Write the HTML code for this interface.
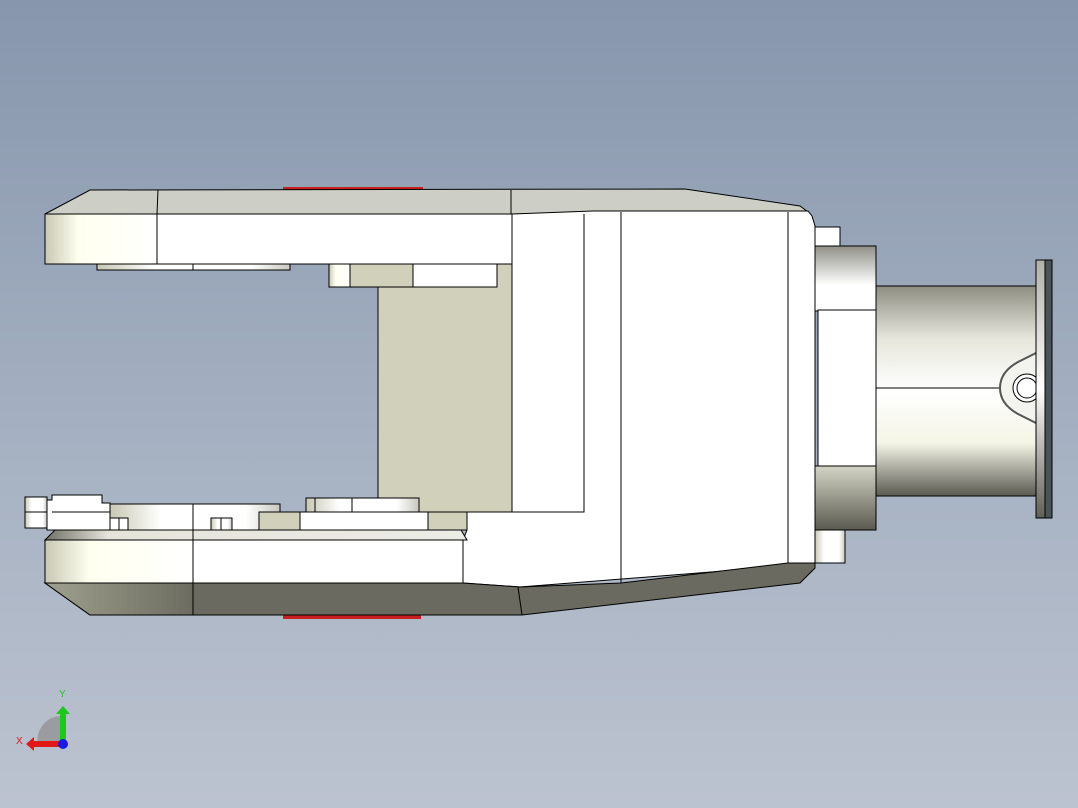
<!DOCTYPE html>
<html><head><meta charset="utf-8"><style>
html,body{margin:0;padding:0;width:1078px;height:808px;overflow:hidden}
body{background:linear-gradient(#8796ad 0%,#a3afc0 50%,#bcc3d0 100%)}
svg{position:absolute;left:0;top:0}
</style></head><body>
<svg width="1078" height="808" viewBox="0 0 1078 808" xmlns="http://www.w3.org/2000/svg">
<defs>
<linearGradient id="endL" x1="0" x2="1" y1="0" y2="0">
<stop offset="0" stop-color="#c8c8b4"/><stop offset="0.3" stop-color="#fffff0"/><stop offset="1" stop-color="#ffffff"/></linearGradient>
<linearGradient id="endD" x1="0" x2="1" y1="0" y2="0">
<stop offset="0" stop-color="#a0a090"/><stop offset="0.5" stop-color="#868676"/><stop offset="1" stop-color="#6c6c62"/></linearGradient>
<linearGradient id="cylV" x1="0" x2="0" y1="0" y2="1">
<stop offset="0" stop-color="#8d8d82"/><stop offset="0.25" stop-color="#e6e6dc"/><stop offset="0.5" stop-color="#ffffff"/><stop offset="0.75" stop-color="#f4f4e6"/><stop offset="1" stop-color="#5a5a52"/></linearGradient>
<linearGradient id="cylT" x1="0" x2="0" y1="0" y2="1">
<stop offset="0" stop-color="#909088"/><stop offset="0.6" stop-color="#ffffff"/><stop offset="1" stop-color="#ffffff"/></linearGradient>
<linearGradient id="cylB" x1="0" x2="0" y1="0" y2="1">
<stop offset="0" stop-color="#d4d4c6"/><stop offset="1" stop-color="#5a5a50"/></linearGradient>
<linearGradient id="flg" x1="0" x2="0" y1="0" y2="1">
<stop offset="0" stop-color="#b0b0a8"/><stop offset="0.5" stop-color="#ffffff"/><stop offset="1" stop-color="#606058"/></linearGradient>
<linearGradient id="hz" x1="0" x2="1" y1="0" y2="0">
<stop offset="0" stop-color="#c8c8b4"/><stop offset="0.3" stop-color="#ffffff"/><stop offset="0.8" stop-color="#ffffff"/><stop offset="1" stop-color="#c8c8c0"/></linearGradient>
<linearGradient id="strip" x1="0" x2="1" y1="0" y2="0">
<stop offset="0" stop-color="#707066"/><stop offset="0.15" stop-color="#e4e4da"/><stop offset="1" stop-color="#ecece6"/></linearGradient>
</defs>
<g stroke="#000" stroke-width="1">
<rect x="283" y="187" width="140" height="3" fill="#c82020" stroke="none"/>
<rect x="283" y="615" width="138" height="4" fill="#c82020" stroke="none"/>
<polygon points="45,214 90,190 685,189 800,206 808,212 512,214" fill="#cdcfc7"/>
<line x1="158" y1="190" x2="157" y2="214"/>
<line x1="511" y1="190" x2="511" y2="214"/>
<rect x="378" y="287" width="134" height="226" fill="#d1d0bb"/>
<rect x="497" y="264" width="15" height="24" fill="#d1d0bb" stroke="none"/>
<rect x="97" y="264" width="193" height="6" fill="url(#hz)"/>
<line x1="193" y1="264" x2="193" y2="270"/>
<rect x="329" y="264" width="168" height="23" fill="#d1d0bb"/>
<rect x="329" y="264" width="21" height="23" fill="url(#endL)"/>
<rect x="413" y="264" width="84" height="23" fill="#fff"/>
<rect x="45" y="214" width="467" height="50" fill="#fff"/>
<rect x="45" y="214" width="112" height="50" fill="url(#endL)"/>
<polygon points="512,214 593,211 808,211 812,216 815,226 815,563 800,565 520,587 463,583 463,540 467,530 467,512 512,512" fill="#fff"/>
<polyline points="512,214 512,512 584,512 584,214" fill="none"/>
<line x1="621" y1="212" x2="621" y2="583"/>
<line x1="788" y1="212" x2="788" y2="563"/>
<polygon points="45,583 463,583 520,587 621,583 788,563 815,563 815,568 800,583 522,615 90,615" fill="#6a6a60"/>
<polygon points="45,583 193,583 193,615 90,615" fill="url(#endD)"/>
<line x1="193" y1="583" x2="193" y2="615"/>
<line x1="518" y1="587" x2="522" y2="615"/>
<rect x="25" y="497" width="22" height="31" fill="url(#hz)"/>
<line x1="25" y1="512" x2="47" y2="512"/>
<polygon points="47,500 52,500 52,495 102,495 102,503 110,503 110,530 47,530" fill="#fff"/>
<line x1="52" y1="512" x2="110" y2="512"/>
<rect x="110" y="504" width="170" height="26" fill="url(#hz)"/>
<line x1="193" y1="504" x2="193" y2="530"/>
<rect x="110" y="518" width="18" height="12" fill="#fff"/>
<line x1="119" y1="518" x2="119" y2="530"/>
<rect x="211" y="518" width="21" height="12" fill="url(#hz)"/>
<line x1="221" y1="518" x2="221" y2="530"/>
<rect x="306" y="498" width="113" height="14" fill="url(#hz)"/>
<line x1="315" y1="498" x2="315" y2="512"/>
<line x1="352" y1="498" x2="352" y2="512"/>
<rect x="259" y="512" width="41" height="18" fill="#d1d0bb"/>
<rect x="300" y="512" width="128" height="18" fill="#fff"/>
<rect x="428" y="512" width="39" height="18" fill="#d1d0bb"/>
<polygon points="45,540 55,530 461,530 467,540" fill="url(#strip)"/>
<rect x="45" y="540" width="418" height="43" fill="#fff"/>
<rect x="45" y="540" width="148" height="43" fill="url(#endL)"/>
<line x1="193" y1="530" x2="193" y2="583"/>
<rect x="815" y="227" width="25" height="20" fill="#fff"/>
<rect x="815" y="530" width="30" height="33" fill="url(#hz)"/>
<rect x="876" y="286" width="160" height="210" fill="url(#cylV)"/>
<line x1="876" y1="388" x2="1000" y2="388"/>
<rect x="815" y="246" width="61" height="65" fill="url(#cylT)"/>
<rect x="818" y="310" width="58" height="156" fill="#fff"/>
<rect x="815" y="466" width="61" height="64" fill="url(#cylB)"/>
<path d="M1036,353 L1018,362 Q1000,372 1000,388 Q1000,404 1018,414 L1036,423" fill="#f4f4ee" stroke="#555" stroke-width="2"/>
<circle cx="1027" cy="388" r="14" fill="#fff"/>
<circle cx="1027" cy="388" r="10" fill="#fff"/>
<rect x="1036" y="260" width="9" height="258" fill="url(#flg)"/>
<rect x="1045" y="260" width="7" height="258" fill="#4a5458"/>
</g>
<path d="M62,745 L38,745 A24,24 0 0 1 62,716 Z" fill="#9a9ca2"/>
<rect x="60" y="713" width="6" height="32" fill="#1cc81c"/>
<polygon points="56,714 63,706 70,714" fill="#1cc81c"/>
<rect x="32" y="741" width="30" height="6" fill="#e01818"/>
<polygon points="34,737 26,744 34,751" fill="#e01818"/>
<circle cx="63" cy="744" r="5" fill="#1a1ae0"/>
<text x="59" y="697" font-family="Liberation Sans, sans-serif" font-size="10" fill="#18c818">Y</text>
<text x="16" y="744" font-family="Liberation Sans, sans-serif" font-size="10" fill="#e01818">X</text>
</svg>
</body></html>
